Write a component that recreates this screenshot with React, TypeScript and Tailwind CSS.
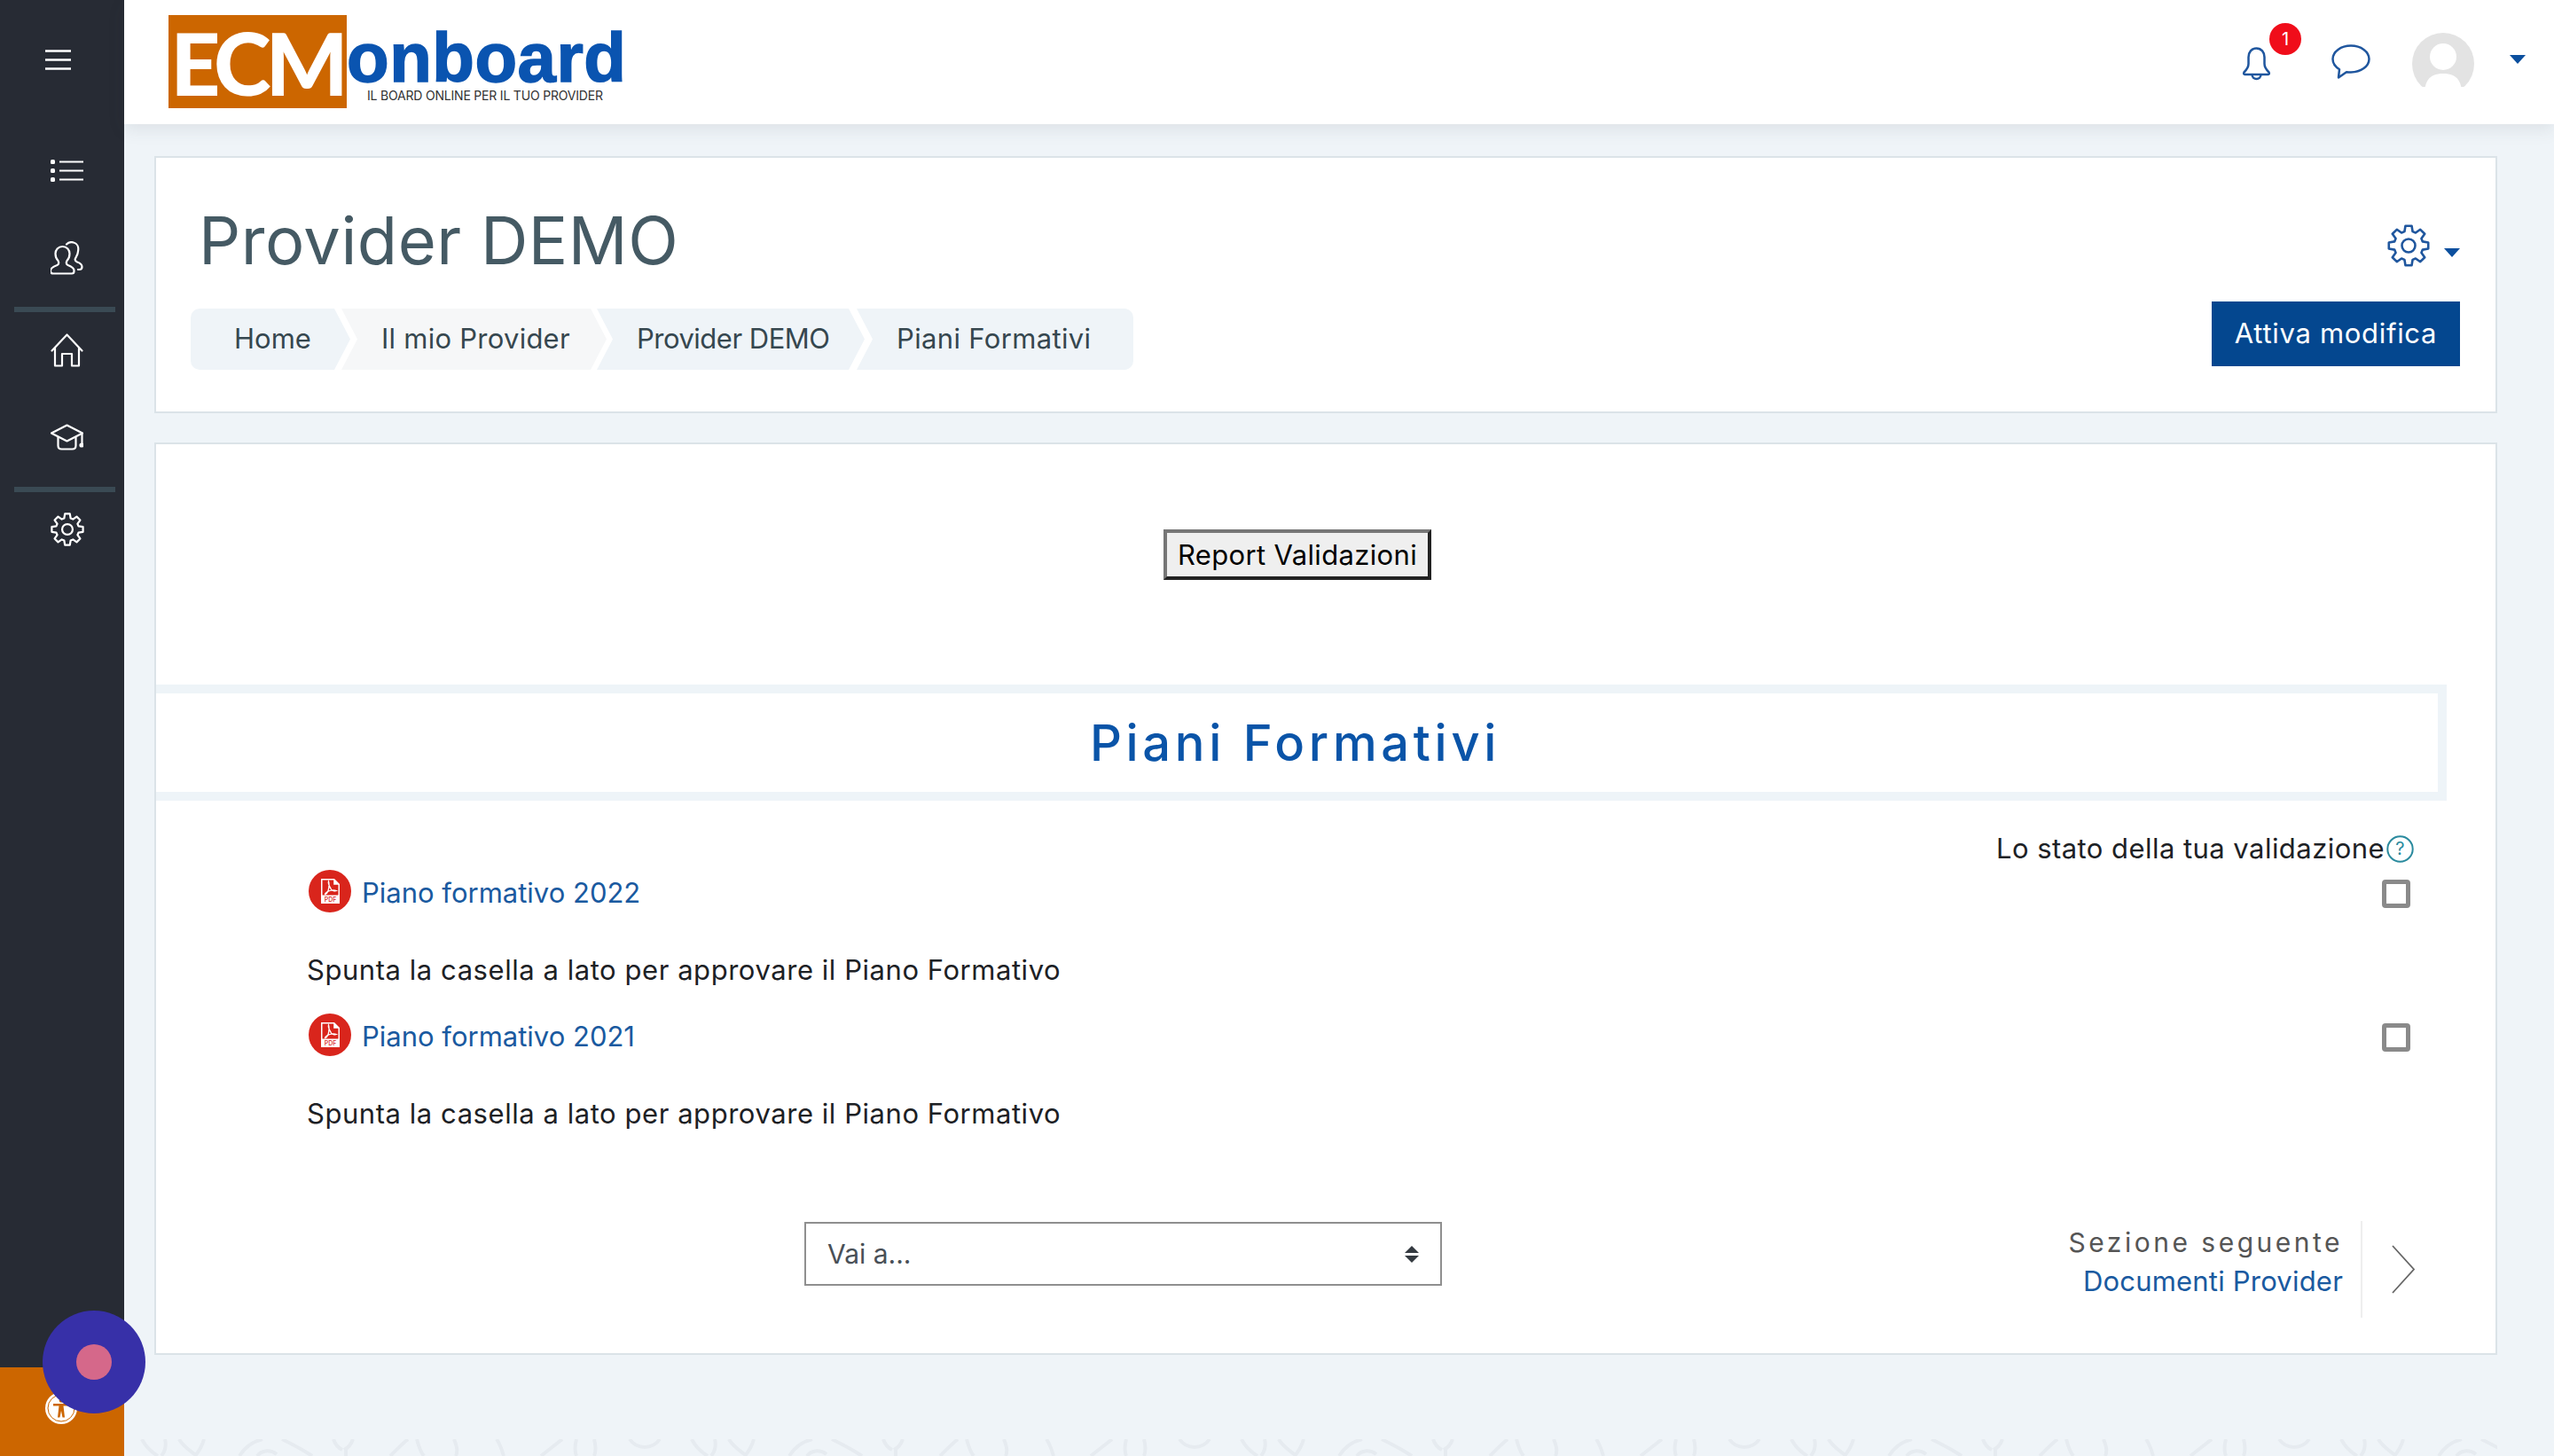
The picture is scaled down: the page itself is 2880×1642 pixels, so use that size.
import React from "react";

const gearPath = (c: number, ro: number, ri: number, teeth = 8) => {
    const pts: string[] = [];
    const step = (Math.PI * 2) / teeth;
    for (let i = 0; i < teeth; i++) {
        const a = i * step - Math.PI / 2;
        const list: [number, number][] = [
            [ri, a - step * 0.36],
            [ro, a - step * 0.2],
            [ro, a + step * 0.2],
            [ri, a + step * 0.36],
        ];
        list.forEach(([r, t]) => {
            pts.push(`${(c + r * Math.cos(t)).toFixed(2)} ${(c + r * Math.sin(t)).toFixed(2)}`);
        });
    }
    return `M${pts.join("L")}Z`;
};

const Gear = ({ size, color, sw }: { size: number; color: string; sw: number }) => (
    <svg width={size} height={size} viewBox="0 0 48 48" fill="none" stroke={color} strokeWidth={sw} strokeLinejoin="round">
        <path d={gearPath(24, 22.5, 16.5)} />
        <circle cx="24" cy="24" r="7.5" />
    </svg>
);

const Caret = () => (
    <svg width="18" height="10" viewBox="0 0 18 10" className="shrink-0">
        <path d="M0 0h18L9 10z" fill="#0b4f9e" />
    </svg>
);

const PdfIcon = () => (
    <svg width="48" height="48" viewBox="0 0 48 48" className="shrink-0">
        <circle cx="24" cy="24" r="24" fill="#d9251c" />
        <path d="M14 10h15l6 6v22H14z" fill="#fff" />
        <path d="M15.5 11.5h12.7v5.3h5.3v11.7h-18z" fill="#d9251c" />
        <path d="M22.5 13c-1 3 2 7 3 9 1 1.5 4 2.5 6 1.5-3-1-8-.5-11 1.5-2 1.5-2.500 3-1.500 2.500 3-1.500 4-7 4-11 0-2-.5-3.500-.5-3.500z" fill="none" stroke="#fff" strokeWidth="1.300" />
        <text x="24.500" y="36" textAnchor="middle" fontSize="7" fill="#d9251c" fontFamily="Inter, sans-serif" fontWeight="500">PDF</text>
    </svg>
);

const Crumb = ({ label, className }: { label: string; className: string }) => (
    <div className={`flex h-[69px] items-center text-[31px] text-[#36474f] ${className}`}>{label}</div>
);

const Checkbox = () => <div className="h-8 w-8 rounded-[4px] border-[5px] border-[#8a8a8a] bg-white" />;

const Sidebar = () => (
    <aside className="flex h-full w-[140px] shrink-0 flex-col bg-[#272b34]">
        <svg className="ml-[51px] mt-[56px]" width="29" height="23" viewBox="0 0 29 23" stroke="#fff" strokeWidth="2.400">
            <path d="M0 1.500h29M0 11.500h29M0 21.500h29" />
        </svg>
        <svg className="ml-[57px] mt-[101px]" width="37" height="25" viewBox="0 0 37 25" fill="#fff">
            <rect x="0" y="0" width="5" height="5" rx="1.500" />
            <rect x="0" y="10" width="5" height="5" rx="1.500" />
            <rect x="0" y="20" width="5" height="5" rx="1.500" />
            <path d="M10 2.500h27M10 12.500h27M10 22.500h27" stroke="#fff" strokeWidth="2.200" />
        </svg>
        <svg className="ml-[57px] mt-[67px]" width="37" height="38" viewBox="0 0 37 38" fill="none" stroke="#fff" strokeWidth="2.200" strokeLinejoin="round" strokeLinecap="round">
            <path d="M3 36.500h21q2.500 0 2.500-2.500v-1c0-3-3-4.500-7-6-2-1-2-3-1-5 2-2 3-5 3-8 0-4-3-8-8-8s-8 4-8 8c0 3 1 6 3 8 1 2 1 4-1 5-4 1.500-7.500 3-7.500 6v1q0 2.500 3 2.500z" />
            <path d="M18 3.500c2-2 5-3 8-2 4 1 6 5 5 10 0 3-2 6-3 8-1 2 0 3 2 4 3 1 5.500 2.500 5.500 5.500 0 2-1 3-3 3h-1.500" />
        </svg>
        <div className="ml-4 mt-9 h-1.5 w-[114px] bg-[#3a4a54]" />
        <svg className="ml-[57px] mt-6" width="37" height="38" viewBox="0 0 37 38" fill="none" stroke="#fff" strokeWidth="2.200" strokeLinejoin="round" strokeLinecap="round">
            <path d="M1.500 19.500L18.500 1.500l17 18" />
            <path d="M5 16v20.500h8V23h11v13.500h8V16" />
        </svg>
        <svg className="ml-[57px] mt-16" width="37" height="30" viewBox="0 0 37 30" fill="none" stroke="#fff" strokeWidth="2.200" strokeLinejoin="round" strokeLinecap="round">
            <path d="M18.500 1.500L36 10.500l-17.500 9-17.500-9z" />
            <path d="M8.500 15v9.500q0 4 4 4h12q4 0 4-4V15" />
            <path d="M35.500 11v11" />
            <circle cx="35" cy="24" r="1.500" fill="#fff" />
        </svg>
        <div className="ml-4 mt-[41px] h-1.5 w-[114px] bg-[#3a4a54]" />
        <div className="ml-[57px] mt-[23px]">
            <Gear size={38} color="#fff" sw={2.800} />
        </div>
        <div className="flex-1" />
        <div className="h-[100px] bg-[#cc6600] pl-[50px] pt-[28px]">
            <svg width="38" height="36" viewBox="0 0 38 36">
                <circle cx="19" cy="18" r="18" fill="#fff" />
                <circle cx="19" cy="18" r="15" fill="none" stroke="#cc6600" strokeWidth="1" />
                <path d="M10 13h18v2.500h-6.500l1.500 13h-2.500L19 21l-1.500 7.500H15l1.500-13H10z" fill="#cc6600" />
                <circle cx="19" cy="9.500" r="2.300" fill="#cc6600" />
            </svg>
        </div>
    </aside>
);

const Header = () => (
    <header className="relative z-10 flex h-[140px] shrink-0 bg-white shadow-[0_6px_18px_rgba(60,70,80,0.10)]">
        <div className="ml-[50px] mt-[17px] flex items-start">
            <div className="flex h-[105px] w-[201px] items-center justify-center bg-[#cc6600] pr-[2px]">
                <span className="text-[98px] leading-none font-black tracking-[-6px] text-white [font-family:Lato,sans-serif]">ECM</span>
            </div>
            <div className="flex w-[320px] flex-col">
                <span className="mt-[18px] h-[60px] text-[78px] leading-[60px] font-bold tracking-[0.5px] text-[#0a54b0] [-webkit-text-stroke:1.5px_#0a54b0] [font-family:'Liberation_Sans',sans-serif]">onboard</span>
                <span className="ml-[23px] mt-[5px] text-[14px] leading-4 tracking-[-0.2px] whitespace-nowrap text-[#333]">IL BOARD ONLINE PER IL TUO PROVIDER</span>
            </div>
        </div>
        <div className="ml-auto flex items-start pr-[32px]">
            <div className="relative mt-[53px]">
                <svg width="33" height="38" viewBox="0 0 33 38" fill="none" stroke="#1f569e" strokeWidth="2.500" strokeLinejoin="round">
                    <path d="M16.500 1.500c-5.500 0-9 4.500-9 10v7.500c0 4-2.500 7-5 9.500q-1 2.500 1 2.500h26q2 0 1-2.500c-2.500-2.500-5-5.500-5-9.500v-7.500c0-5.500-3.500-10-9-10z" />
                    <path d="M11.500 31a5 5 0 0 0 10 0" />
                </svg>
                <div className="absolute -top-[27px] left-[31px] flex h-9 w-9 items-center justify-center rounded-full bg-[#f00d1a] text-[20px] leading-none text-white">1</div>
            </div>
            <svg className="ml-[68px] mt-[50px]" width="44" height="39" viewBox="0 0 44 39" fill="none" stroke="#1f569e" strokeWidth="2.500" strokeLinejoin="round">
                <path d="M22 1.500C10.700 1.500 1.500 8.200 1.500 16.500c0 4.700 3 8.900 7.500 11.700L8 37.500l9-6.300c1.600.2 3.300.3 5 .3 11.300 0 20.500-6.700 20.500-15S33.300 1.500 22 1.500z" />
            </svg>
            <svg className="ml-[47px] mt-[37px]" width="70" height="70" viewBox="0 0 70 70">
                <circle cx="35" cy="35" r="35" fill="#e3e3e3" />
                <circle cx="35" cy="27" r="15" fill="#fff" />
                <path d="M14 70c0-14 4-24 21-24s21 10 21 24z" fill="#fff" />
                <path d="M0 61h70v9H0z" fill="#fff" />
            </svg>
            <div className="ml-10 mt-[62px] flex">
                <Caret />
            </div>
        </div>
    </header>
);

const TitleCard = () => (
    <section className="flex h-[290px] justify-between border-2 border-[#dbe3e8] bg-white pl-10 pr-10">
        <div className="pt-12">
            <h1 className="ml-2 h-[90px] text-[74px] leading-[90px] font-normal tracking-[0.5px] text-[#455a64]">Provider DEMO</h1>
            <nav className="-ml-px mt-8 flex">
                <Crumb label="Home" className="w-[180px] rounded-l-[10px] bg-[#eff4f8] pl-[49px] [clip-path:polygon(0_0,calc(100%_-_18px)_0,100%_50%,calc(100%_-_18px)_100%,0_100%)]" />
                <Crumb label="Il mio Provider" className="-ml-[10px] w-[299px] bg-[#f6f7f8] pl-[45px] tracking-[0.25px] [clip-path:polygon(0_0,calc(100%_-_18px)_0,100%_50%,calc(100%_-_18px)_100%,0_100%,18px_50%)]" />
                <Crumb label="Provider DEMO" className="-ml-[11px] w-[302px] bg-[#eff4f8] pl-[45px] tracking-[-0.5px] [clip-path:polygon(0_0,calc(100%_-_18px)_0,100%_50%,calc(100%_-_18px)_100%,0_100%,18px_50%)]" />
                <Crumb label="Piani Formativi" className="-ml-[9px] w-[312px] rounded-r-[10px] bg-[#eff4f8] pl-[45px] tracking-[0.35px] [clip-path:polygon(0_0,100%_0,100%_100%,0_100%,18px_50%)]" />
            </nav>
        </div>
        <div className="flex flex-col items-end pt-[75px]">
            <div className="flex items-center gap-4">
                <Gear size={48} color="#1f569e" sw={2.600} />
                <div className="mt-[16px] flex">
                    <Caret />
                </div>
            </div>
            <button className="mt-[39px] h-[73px] w-[280px] bg-[#04478f] text-[31px] tracking-[0.7px] text-white">Attiva modifica</button>
        </div>
    </section>
);

const PlanRow = ({ title }: { title: string }) => (
    <>
        <div className="flex items-center justify-between pl-[172px] pr-24">
            <a className="flex items-center gap-[12px] text-[31px] leading-none tracking-[0px] text-[#1a5aa0]">
                <PdfIcon />
                <span className="pt-[3px]">{title}</span>
            </a>
            <div className="mt-[6px]">
                <Checkbox />
            </div>
        </div>
        <p className="mt-[43px] pl-[170px] text-[31px] leading-[44px] tracking-[0.55px] text-[#1d2125]">Spunta la casella a lato per approvare il Piano Formativo</p>
    </>
);

const ContentCard = () => (
    <section className="mt-[33px] h-[1029px] border-2 border-[#dbe3e8] bg-white">
        <div className="flex justify-center pr-[64px] pt-24">
            <button className="h-[57px] w-[302px] border-4 border-t-[#767676] border-r-[#222] border-b-[#222] border-l-[#767676] bg-[#efefef] text-[31px] leading-none tracking-[0.35px] text-black">Report Validazioni</button>
        </div>
        <div className="mr-[55px] mt-[118px] flex h-[131px] items-center justify-center border-y-[10px] border-r-[10px] border-[#eef4f8] pr-[4px]">
            <h2 className="text-[56px] leading-none font-medium tracking-[4.7px] text-[#0a54a8]">Piani Formativi</h2>
        </div>
        <div className="mt-8 flex items-center justify-end pr-[92px] text-[31px] leading-[44px] tracking-[0.45px] text-[#1d2125]">
            Lo stato della tua validazione
            <svg className="ml-[2px]" width="31" height="31" viewBox="0 0 31 31" fill="none" stroke="#2a8a9e" strokeWidth="2">
                <circle cx="15.500" cy="15.500" r="14.200" />
                <text x="15.500" y="22" textAnchor="middle" fontSize="20" fill="#2a8a9e" stroke="none" fontFamily="Inter, sans-serif">?</text>
            </svg>
        </div>
        <div className="mt-[2px]">
            <PlanRow title="Piano formativo 2022" />
        </div>
        <div className="mt-[27px]">
            <PlanRow title="Piano formativo 2021" />
        </div>
        <div className="mt-[100px] flex items-start">
            <div className="ml-[731px] flex h-[72px] w-[719px] shrink-0 items-center justify-between border-2 border-[#8f8f8f] pl-6 pr-6 text-[30px] text-[#495057]">
                Vai a...
                <svg width="16" height="19" viewBox="0 0 16 19" fill="#343a40">
                    <path d="M8 0l8 8H0zM8 19l-8-8h16z" />
                </svg>
            </div>
            <div className="-mt-[1px] ml-auto flex h-[109px] items-center pr-[91px]">
                <div className="flex h-full flex-col items-end border-r-2 border-[#eeeeee] pr-5 pt-[2px]">
                    <span className="text-[30px] leading-[44px] tracking-[3.5px] text-[#555]">Sezione seguente</span>
                    <a className="text-[31px] leading-[44px] tracking-[0.2px] text-[#1a5aa0]">Documenti Provider</a>
                </div>
                <svg className="ml-[33px]" width="26" height="55" viewBox="0 0 26 55" fill="none" stroke="#666" strokeWidth="1.800">
                    <path d="M1 1l24 26.500L1 54" />
                </svg>
            </div>
        </div>
    </section>
);

const Footer = () => (
    <svg className="block h-[19px] w-[2676px] shrink-0" viewBox="0 0 2676 19" fill="none" stroke="#e6ebf0" strokeWidth="4">
        <defs>
            <pattern id="waves" width="620" height="19" patternUnits="userSpaceOnUse">
                <path d="M20 0c4 8 10 14 18 19M46 0c2 8 0 14-4 19M62 0c4 8 14 14 20 19M90 0c-2 8-6 14-10 19" />
                <path d="M130 19c6-10 14-16 26-19M150 19c4-6 14-8 22-2M178 0c12 6 24 12 34 19" />
                <path d="M236 0c2 6 6 10 10 12M258 0c-2 6-6 10-10 12M250 12v7M300 19c8-8 14-14 20-19M330 0c2 8 4 14 8 19" />
                <path d="M372 0c4 10 4 14 2 19M420 0c4 6 6 12 8 19M470 19c10-8 18-14 24-19M510 0c-2 8-2 14 0 19M530 0c2 8 2 14 0 19" />
                <path d="M570 0c8 12 26 12 34 0" />
            </pattern>
        </defs>
        <rect width="2676" height="19" fill="url(#waves)" stroke="none" />
    </svg>
);

export default function App() {
    return (
        <div className="relative flex h-[1642px] w-[2880px] overflow-hidden bg-[#eff4f8] [font-family:Inter,sans-serif]">
            <Sidebar />
            <div className="flex min-w-0 flex-1 flex-col">
                <Header />
                <main className="flex-1 pl-[34px] pr-[64px] pt-[36px]">
                    <TitleCard />
                    <ContentCard />
                </main>
                <Footer />
            </div>
            {/* chat launcher floating over the sidebar */}
            <div className="absolute left-[48px] top-[1478px] flex h-[116px] w-[116px] items-center justify-center rounded-full bg-[#3730a8]">
                <div className="h-10 w-10 rounded-full bg-[#d5688a]" />
            </div>
        </div>
    );
}
